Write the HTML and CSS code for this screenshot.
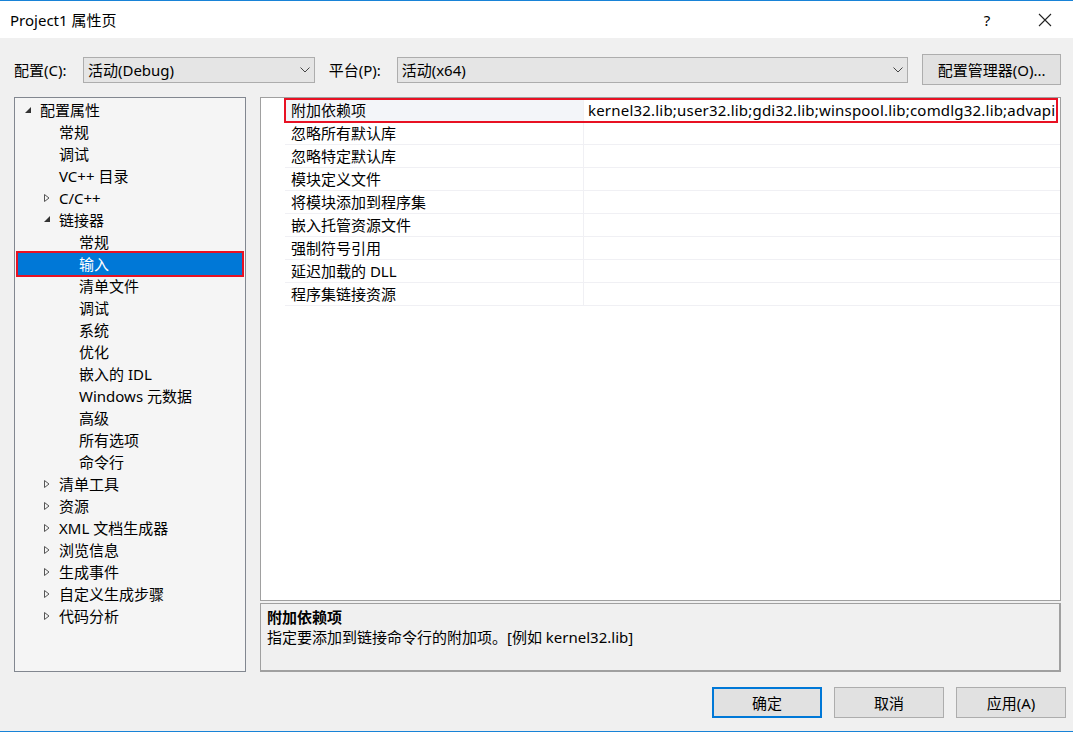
FILE: index.html
```html
<!DOCTYPE html>
<html lang="zh-CN">
<head>
<meta charset="utf-8">
<title>Project1 属性页</title>
<link rel="stylesheet" href="styles.css">
</head>
<body>
<div class="window">
  <div class="titlebar">
    <span class="title">Project1 属性页</span>
    <span class="help">?</span>
    <span class="close"><svg width="14" height="14" viewBox="0 0 14 14"><path d="M1 1L13 13M13 1L1 13" stroke="#222" stroke-width="1.1" fill="none"/></svg></span>
  </div>
  <div class="content">
    <div class="configrow">
      <span class="label">配置(C):</span>
      <div class="select sel-config"><span>活动(Debug)</span><svg class="chev" width="10" height="6" viewBox="0 0 10 6"><path d="M0.5 0.5L5 5L9.5 0.5" stroke="#444" fill="none"/></svg></div>
      <span class="label label-plat">平台(P):</span>
      <div class="select sel-plat"><span>活动(x64)</span><svg class="chev" width="10" height="6" viewBox="0 0 10 6"><path d="M0.5 0.5L5 5L9.5 0.5" stroke="#444" fill="none"/></svg></div>
      <div class="btn btn-mgr">配置管理器(O)...</div>
    </div>
    <div class="main">
      <div class="tree">
        <div class="node l0"><svg class="tri" width="8" height="8" viewBox="0 0 8 8"><path d="M7 1V7H1Z" fill="#333"/></svg>配置属性</div>
        <div class="node l1">常规</div>
        <div class="node l1">调试</div>
        <div class="node l1">VC++ 目录</div>
        <div class="node l1"><svg class="tri" width="8" height="10" viewBox="0 0 8 10"><path d="M1.5 1.5V8.5L6 5Z" fill="none" stroke="#555" stroke-width="1"/></svg>C/C++</div>
        <div class="node l1"><svg class="tri" width="8" height="8" viewBox="0 0 8 8"><path d="M7 1V7H1Z" fill="#333"/></svg>链接器</div>
        <div class="node l2">常规</div>
        <div class="node l2 selected">输入</div>
        <div class="node l2">清单文件</div>
        <div class="node l2">调试</div>
        <div class="node l2">系统</div>
        <div class="node l2">优化</div>
        <div class="node l2">嵌入的 IDL</div>
        <div class="node l2">Windows 元数据</div>
        <div class="node l2">高级</div>
        <div class="node l2">所有选项</div>
        <div class="node l2">命令行</div>
        <div class="node l1"><svg class="tri" width="8" height="10" viewBox="0 0 8 10"><path d="M1.5 1.5V8.5L6 5Z" fill="none" stroke="#555" stroke-width="1"/></svg>清单工具</div>
        <div class="node l1"><svg class="tri" width="8" height="10" viewBox="0 0 8 10"><path d="M1.5 1.5V8.5L6 5Z" fill="none" stroke="#555" stroke-width="1"/></svg>资源</div>
        <div class="node l1"><svg class="tri" width="8" height="10" viewBox="0 0 8 10"><path d="M1.5 1.5V8.5L6 5Z" fill="none" stroke="#555" stroke-width="1"/></svg>XML 文档生成器</div>
        <div class="node l1"><svg class="tri" width="8" height="10" viewBox="0 0 8 10"><path d="M1.5 1.5V8.5L6 5Z" fill="none" stroke="#555" stroke-width="1"/></svg>浏览信息</div>
        <div class="node l1"><svg class="tri" width="8" height="10" viewBox="0 0 8 10"><path d="M1.5 1.5V8.5L6 5Z" fill="none" stroke="#555" stroke-width="1"/></svg>生成事件</div>
        <div class="node l1"><svg class="tri" width="8" height="10" viewBox="0 0 8 10"><path d="M1.5 1.5V8.5L6 5Z" fill="none" stroke="#555" stroke-width="1"/></svg>自定义生成步骤</div>
        <div class="node l1"><svg class="tri" width="8" height="10" viewBox="0 0 8 10"><path d="M1.5 1.5V8.5L6 5Z" fill="none" stroke="#555" stroke-width="1"/></svg>代码分析</div>
      </div>
      <div class="right">
        <div class="grid">
          <div class="row active"><div class="name">附加依赖项</div><div class="value">kernel32.lib;user32.lib;gdi32.lib;winspool.lib;comdlg32.lib;advapi</div></div>
          <div class="row"><div class="name">忽略所有默认库</div><div class="value"></div></div>
          <div class="row"><div class="name">忽略特定默认库</div><div class="value"></div></div>
          <div class="row"><div class="name">模块定义文件</div><div class="value"></div></div>
          <div class="row"><div class="name">将模块添加到程序集</div><div class="value"></div></div>
          <div class="row"><div class="name">嵌入托管资源文件</div><div class="value"></div></div>
          <div class="row"><div class="name">强制符号引用</div><div class="value"></div></div>
          <div class="row"><div class="name">延迟加载的 DLL</div><div class="value"></div></div>
          <div class="row"><div class="name">程序集链接资源</div><div class="value"></div></div>
        </div>
        <div class="desc">
          <div class="desc-title">附加依赖项</div>
          <div class="desc-text">指定要添加到链接命令行的附加项。[例如 kernel32.lib]</div>
        </div>
      </div>
    </div>
    <div class="buttons">
      <div class="btn btn-ok">确定</div>
      <div class="btn">取消</div>
      <div class="btn">应用(A)</div>
    </div>
  </div>
</div>
</body>
</html>
```
FILE: styles.css
```css
* { box-sizing: border-box; }
html, body { margin: 0; padding: 0; }
body {
  width: 1073px;
  height: 732px;
  overflow: hidden;
  font-family: "Noto Sans", "Noto Sans CJK SC", sans-serif;
  font-size: 15px;
  color: #000;
  background: #f0f0f0;
}
.window {
  width: 1073px;
  height: 732px;
  border-top: 1px solid #1883d7;
  border-bottom: 1px solid #1883d7;
  display: flex;
  flex-direction: column;
  background: #f0f0f0;
}
.titlebar {
  height: 37px;
  background: #fff;
  display: flex;
  align-items: center;
  padding-left: 10px;
  flex: none;
}
.title { flex: 1; font-size: 15px; }
.help { width: 14px; margin-right: 44px; font-size: 15px; text-align: center; }
.close { width: 14px; height: 14px; margin-right: 21px; display: flex; }
.content {
  flex: 1;
  display: flex;
  flex-direction: column;
  padding: 16px 12px 0 14px;
}
.configrow {
  display: flex;
  align-items: center;
  height: 31px;
}
.label { white-space: nowrap; width: 69px; }
.label-plat { width: 68px; margin-left: 14px; }
.select {
  height: 26px;
  background: #e5e5e5;
  border: 1px solid #adadad;
  display: flex;
  align-items: center;
  justify-content: space-between;
  padding: 0 4px 0 4px;
}
.sel-config { width: 232px; }
.sel-plat { width: 512px; }
.btn {
  height: 31px;
  background: #e1e1e1;
  border: 1px solid #adadad;
  display: flex;
  align-items: center;
  justify-content: center;
  white-space: nowrap;
}
.btn-mgr { width: 139px; margin-left: 14px; }
.main {
  display: flex;
  margin-top: 12px;
  height: 575px;
  gap: 14px;
}
.tree {
  width: 233px;
  border: 1px solid #828790;
  background: #f5f5f5;
  padding: 1px 2px 0 2px;
}
.node {
  height: 22px;
  line-height: 22px;
  position: relative;
  white-space: nowrap;
}
.node.l0 { padding-left: 23px; }
.node.l1 { padding-left: 42px; }
.node.l2 { padding-left: 62px; }
.tri {
  position: absolute;
  top: 6px;
}
.l0 .tri { left: 7px; top: 7px; }
.l1 .tri { left: 26px; }
.node.selected {
  background: #0078d7;
  color: #fff;
  outline: 2px solid #e81123;
  margin: 0 1px;
  padding-left: 61px;
}
.right {
  width: 801px;
  display: flex;
  flex-direction: column;
  gap: 2px;
}
.grid {
  height: 504px;
  background: #fff;
  border: 1px solid #a0a0a0;
  padding: 1px 0 0 24px;
}
.row {
  display: flex;
  height: 23px;
  line-height: 22px;
  border-bottom: 1px solid #f0f0f4;
}
.row .name {
  width: 299px;
  padding-left: 6px;
  border-right: 1px solid #f0f0f4;
  white-space: nowrap;
}
.row .value {
  flex: 1;
  padding-left: 4px;
  white-space: nowrap;
  overflow: hidden;
  margin-right: 3px;
  letter-spacing: 0.2px;
}
.row.active {
  outline: 2px solid #e81123;
  outline-offset: -1px;
  margin-right: 3px;
}
.row.active .name { background: #f3f5f9; }
.row.active .value { margin-right: 2px; }
.desc {
  height: 69px;
  border: 2px solid #a0a0a0;
  border-top-width: 1px;
  border-left-width: 1px;
  background: #f0f0f0;
  padding: 3px 6px;
}
.desc-title { font-weight: bold; line-height: 20px; }
.desc-text { line-height: 21px; }
.buttons {
  display: flex;
  justify-content: flex-end;
  gap: 12px;
  margin-top: 15px;
  margin-right: -5px;
}
.buttons .btn { width: 110px; }
.buttons .btn-ok { border: 2px solid #0078d7; }
```
